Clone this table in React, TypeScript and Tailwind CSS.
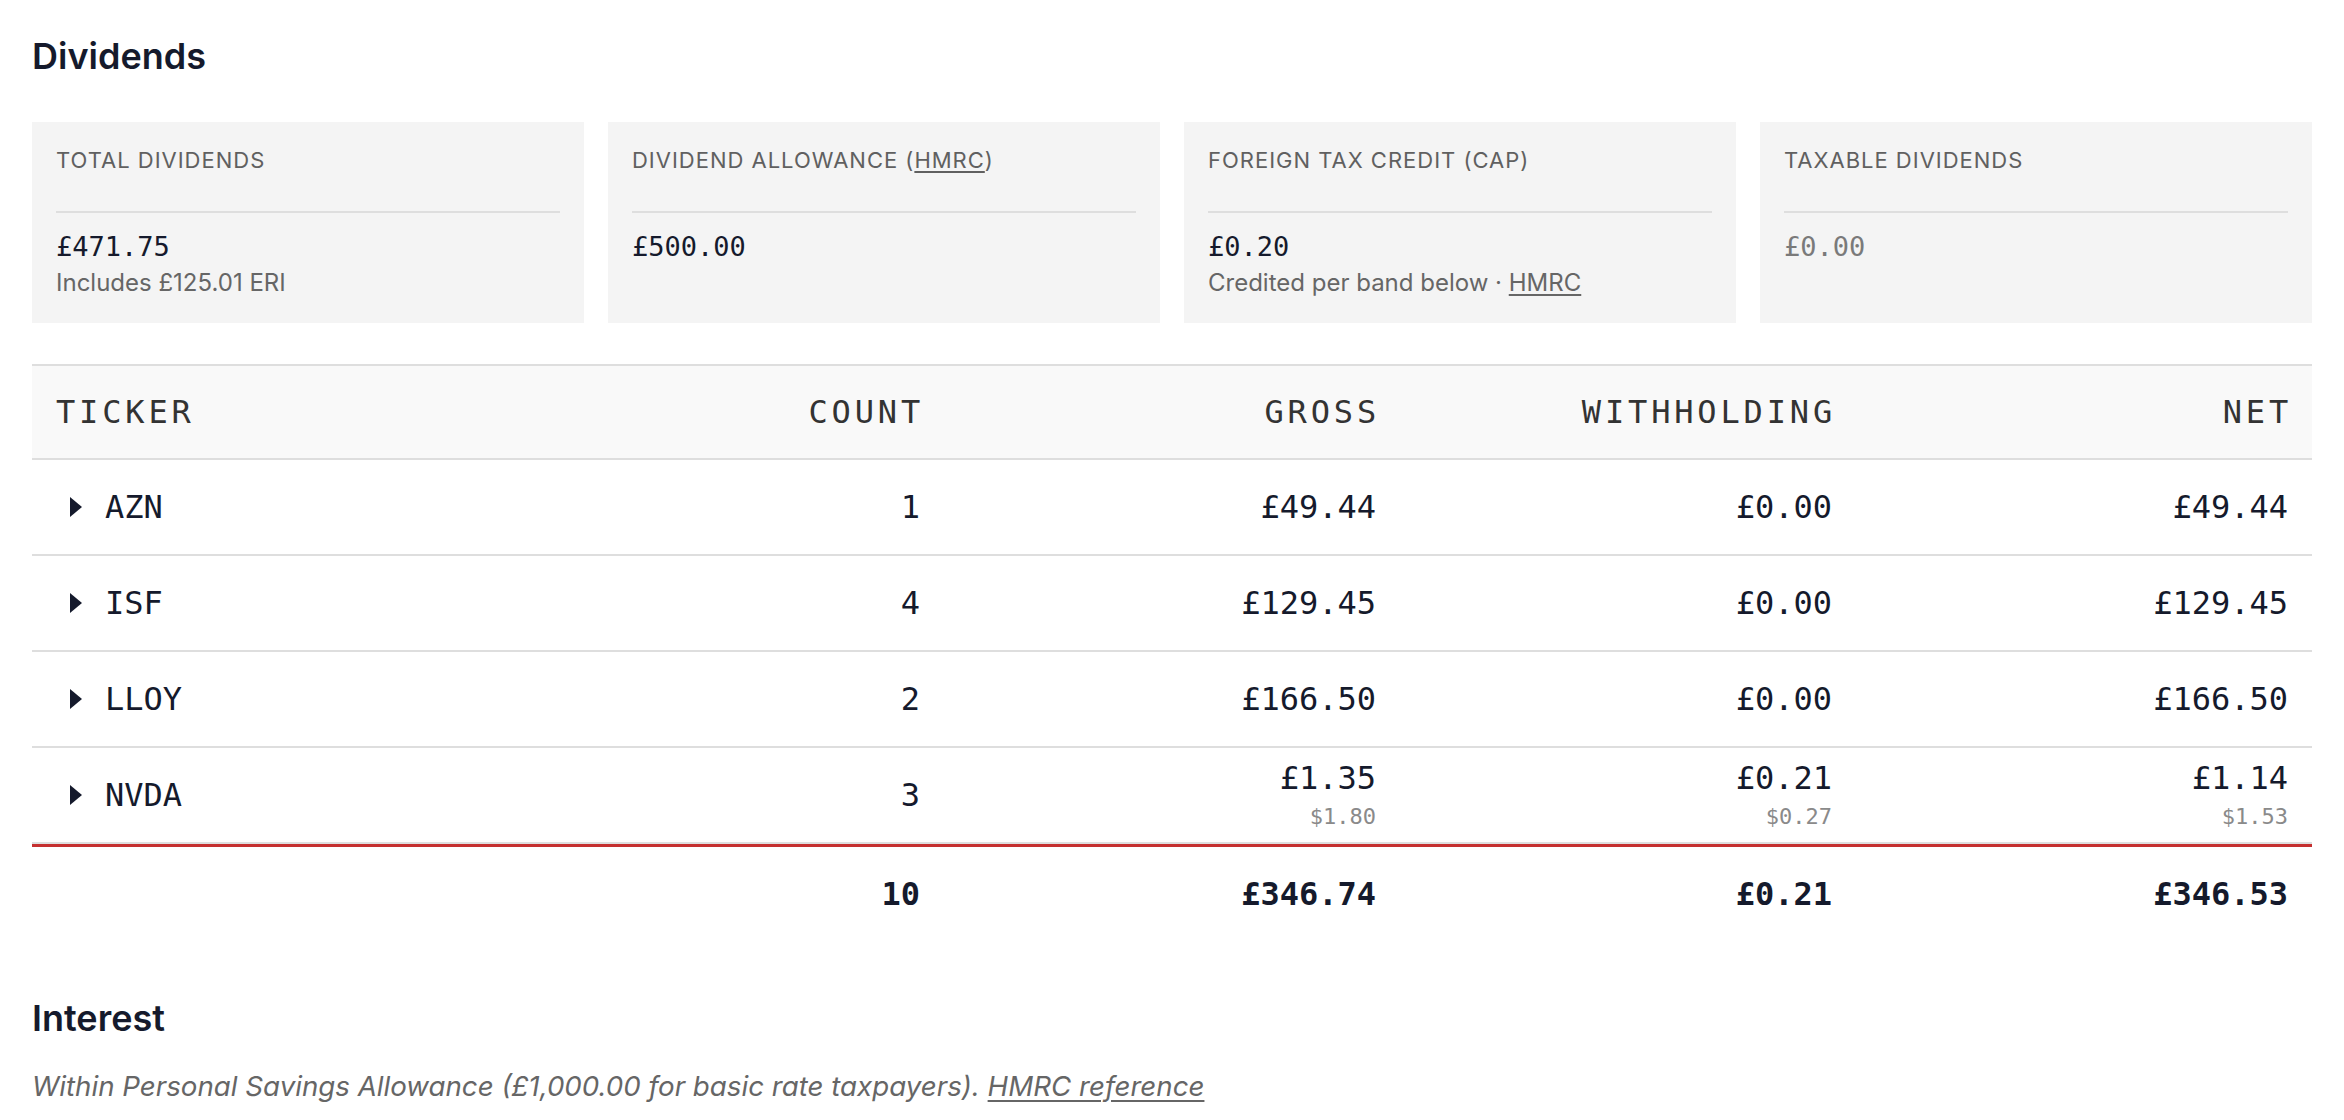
import React from 'react';

type Amount = { gbp: string; usd?: string };
type Holding = { ticker: string; count: number; gross: Amount; withholding: Amount; net: Amount };

const holdings: Holding[] = [
  { ticker: 'AZN', count: 1, gross: { gbp: '£49.44' }, withholding: { gbp: '£0.00' }, net: { gbp: '£49.44' } },
  { ticker: 'ISF', count: 4, gross: { gbp: '£129.45' }, withholding: { gbp: '£0.00' }, net: { gbp: '£129.45' } },
  { ticker: 'LLOY', count: 2, gross: { gbp: '£166.50' }, withholding: { gbp: '£0.00' }, net: { gbp: '£166.50' } },
  {
    ticker: 'NVDA',
    count: 3,
    gross: { gbp: '£1.35', usd: '$1.80' },
    withholding: { gbp: '£0.21', usd: '$0.27' },
    net: { gbp: '£1.14', usd: '$1.53' },
  },
];

const Caret = () => (
  <svg width="12" height="20" viewBox="0 0 12 20" className="ml-[14px] mr-[23px] shrink-0 fill-[#151a2c]">
    <polygon points="0,0 12,10 0,20" />
  </svg>
);

const MoneyCell = ({ value }: { value: Amount }) => (
  <div className="flex flex-col items-end justify-center px-[24px] text-right">
    <span className="text-[32px] leading-[36px]">{value.gbp}</span>
    {value.usd && <span className="mt-[7px] text-[22px] leading-[28px] text-[#8a8a8a]">{value.usd}</span>}
  </div>
);

const StatCard = ({
  label,
  value,
  note,
  muted,
}: {
  label: React.ReactNode;
  value: string;
  note?: React.ReactNode;
  muted?: boolean;
}) => (
  <div className="bg-[#f4f4f4] p-[24px]">
    <div className="border-b-2 border-[#dedede] pb-[37px] text-[22px] leading-[28px] tracking-[0.045em] text-[#606060]">
      {label}
    </div>
    <div
      className={`mt-[16px] font-['DejaVu_Sans_Mono',monospace] text-[27px] leading-[36px] ${
        muted ? 'text-[#7a7a7a]' : 'text-[#151a2c]'
      }`}
    >
      {value}
    </div>
    {note && <div className="mt-[2px] text-[24px] leading-[32px] text-[#666666]">{note}</div>}
  </div>
);

export default function App() {
  return (
    <div className="min-h-screen bg-white px-[32px] pt-[34px] font-['Inter',sans-serif] text-[#151a2c]">
      <h2 className="text-[36px] font-semibold leading-[44px] text-[#151a2c]">Dividends</h2>

      <div className="mt-[44px] grid grid-cols-4 gap-[24px]">
        <StatCard label="TOTAL DIVIDENDS" value="£471.75" note="Includes £125.01 ERI" />
        <StatCard
          label={
            <>
              DIVIDEND ALLOWANCE (<span className="underline decoration-[1.5px] underline-offset-[3px]">HMRC</span>)
            </>
          }
          value="£500.00"
        />
        <StatCard
          label="FOREIGN TAX CREDIT (CAP)"
          value="£0.20"
          note={
            <>
              Credited per band below · <span className="underline decoration-[1.5px] underline-offset-[3px]">HMRC</span>
            </>
          }
        />
        <StatCard label="TAXABLE DIVIDENDS" value="£0.00" muted />
      </div>

      <div className="mt-[41px] border-t-2 border-[#dedede] font-['DejaVu_Sans_Mono',monospace]">
        <div className="grid h-[94px] grid-cols-5 items-center border-b-2 border-[#dedede] bg-[#f9f9f9] text-[32px] leading-[36px] tracking-[0.12em] text-[#333333]">
          <div className="px-[24px]">TICKER</div>
          <div className="px-[24px] text-right"><span className="mr-[-4px]">COUNT</span></div>
          <div className="px-[24px] text-right"><span className="mr-[-4px]">GROSS</span></div>
          <div className="px-[24px] text-right"><span className="mr-[-4px]">WITHHOLDING</span></div>
          <div className="px-[24px] text-right"><span className="mr-[-4px]">NET</span></div>
        </div>

        {holdings.map((h) => (
          <div key={h.ticker} className="grid h-[96px] grid-cols-5 items-center border-b-2 border-[#dedede]">
            <div className="flex items-center px-[24px] text-[32px] leading-[36px]">
              <Caret />
              {h.ticker}
            </div>
            <div className="px-[24px] text-right text-[32px] leading-[36px]">{h.count}</div>
            <MoneyCell value={h.gross} />
            <MoneyCell value={h.withholding} />
            <MoneyCell value={h.net} />
          </div>
        ))}

        <div className="grid h-[97px] grid-cols-5 items-center border-t-[3px] border-[#c53030] text-[32px] font-bold leading-[36px]">
          <div className="px-[24px]" />
          <div className="px-[24px] text-right">10</div>
          <div className="px-[24px] text-right">£346.74</div>
          <div className="px-[24px] text-right">£0.21</div>
          <div className="px-[24px] text-right">£346.53</div>
        </div>
      </div>

      <h2 className="mt-[55px] text-[36px] font-semibold leading-[44px] text-[#151a2c]">Interest</h2>
      <p className="mt-[26px] text-[27.7px] italic leading-[40px] text-[#666666]">
        Within Personal Savings Allowance (£1,000.00 for basic rate taxpayers).{' '}
        <span className="underline decoration-[1.5px] underline-offset-[4px]">HMRC reference</span>
      </p>
    </div>
  );
}
